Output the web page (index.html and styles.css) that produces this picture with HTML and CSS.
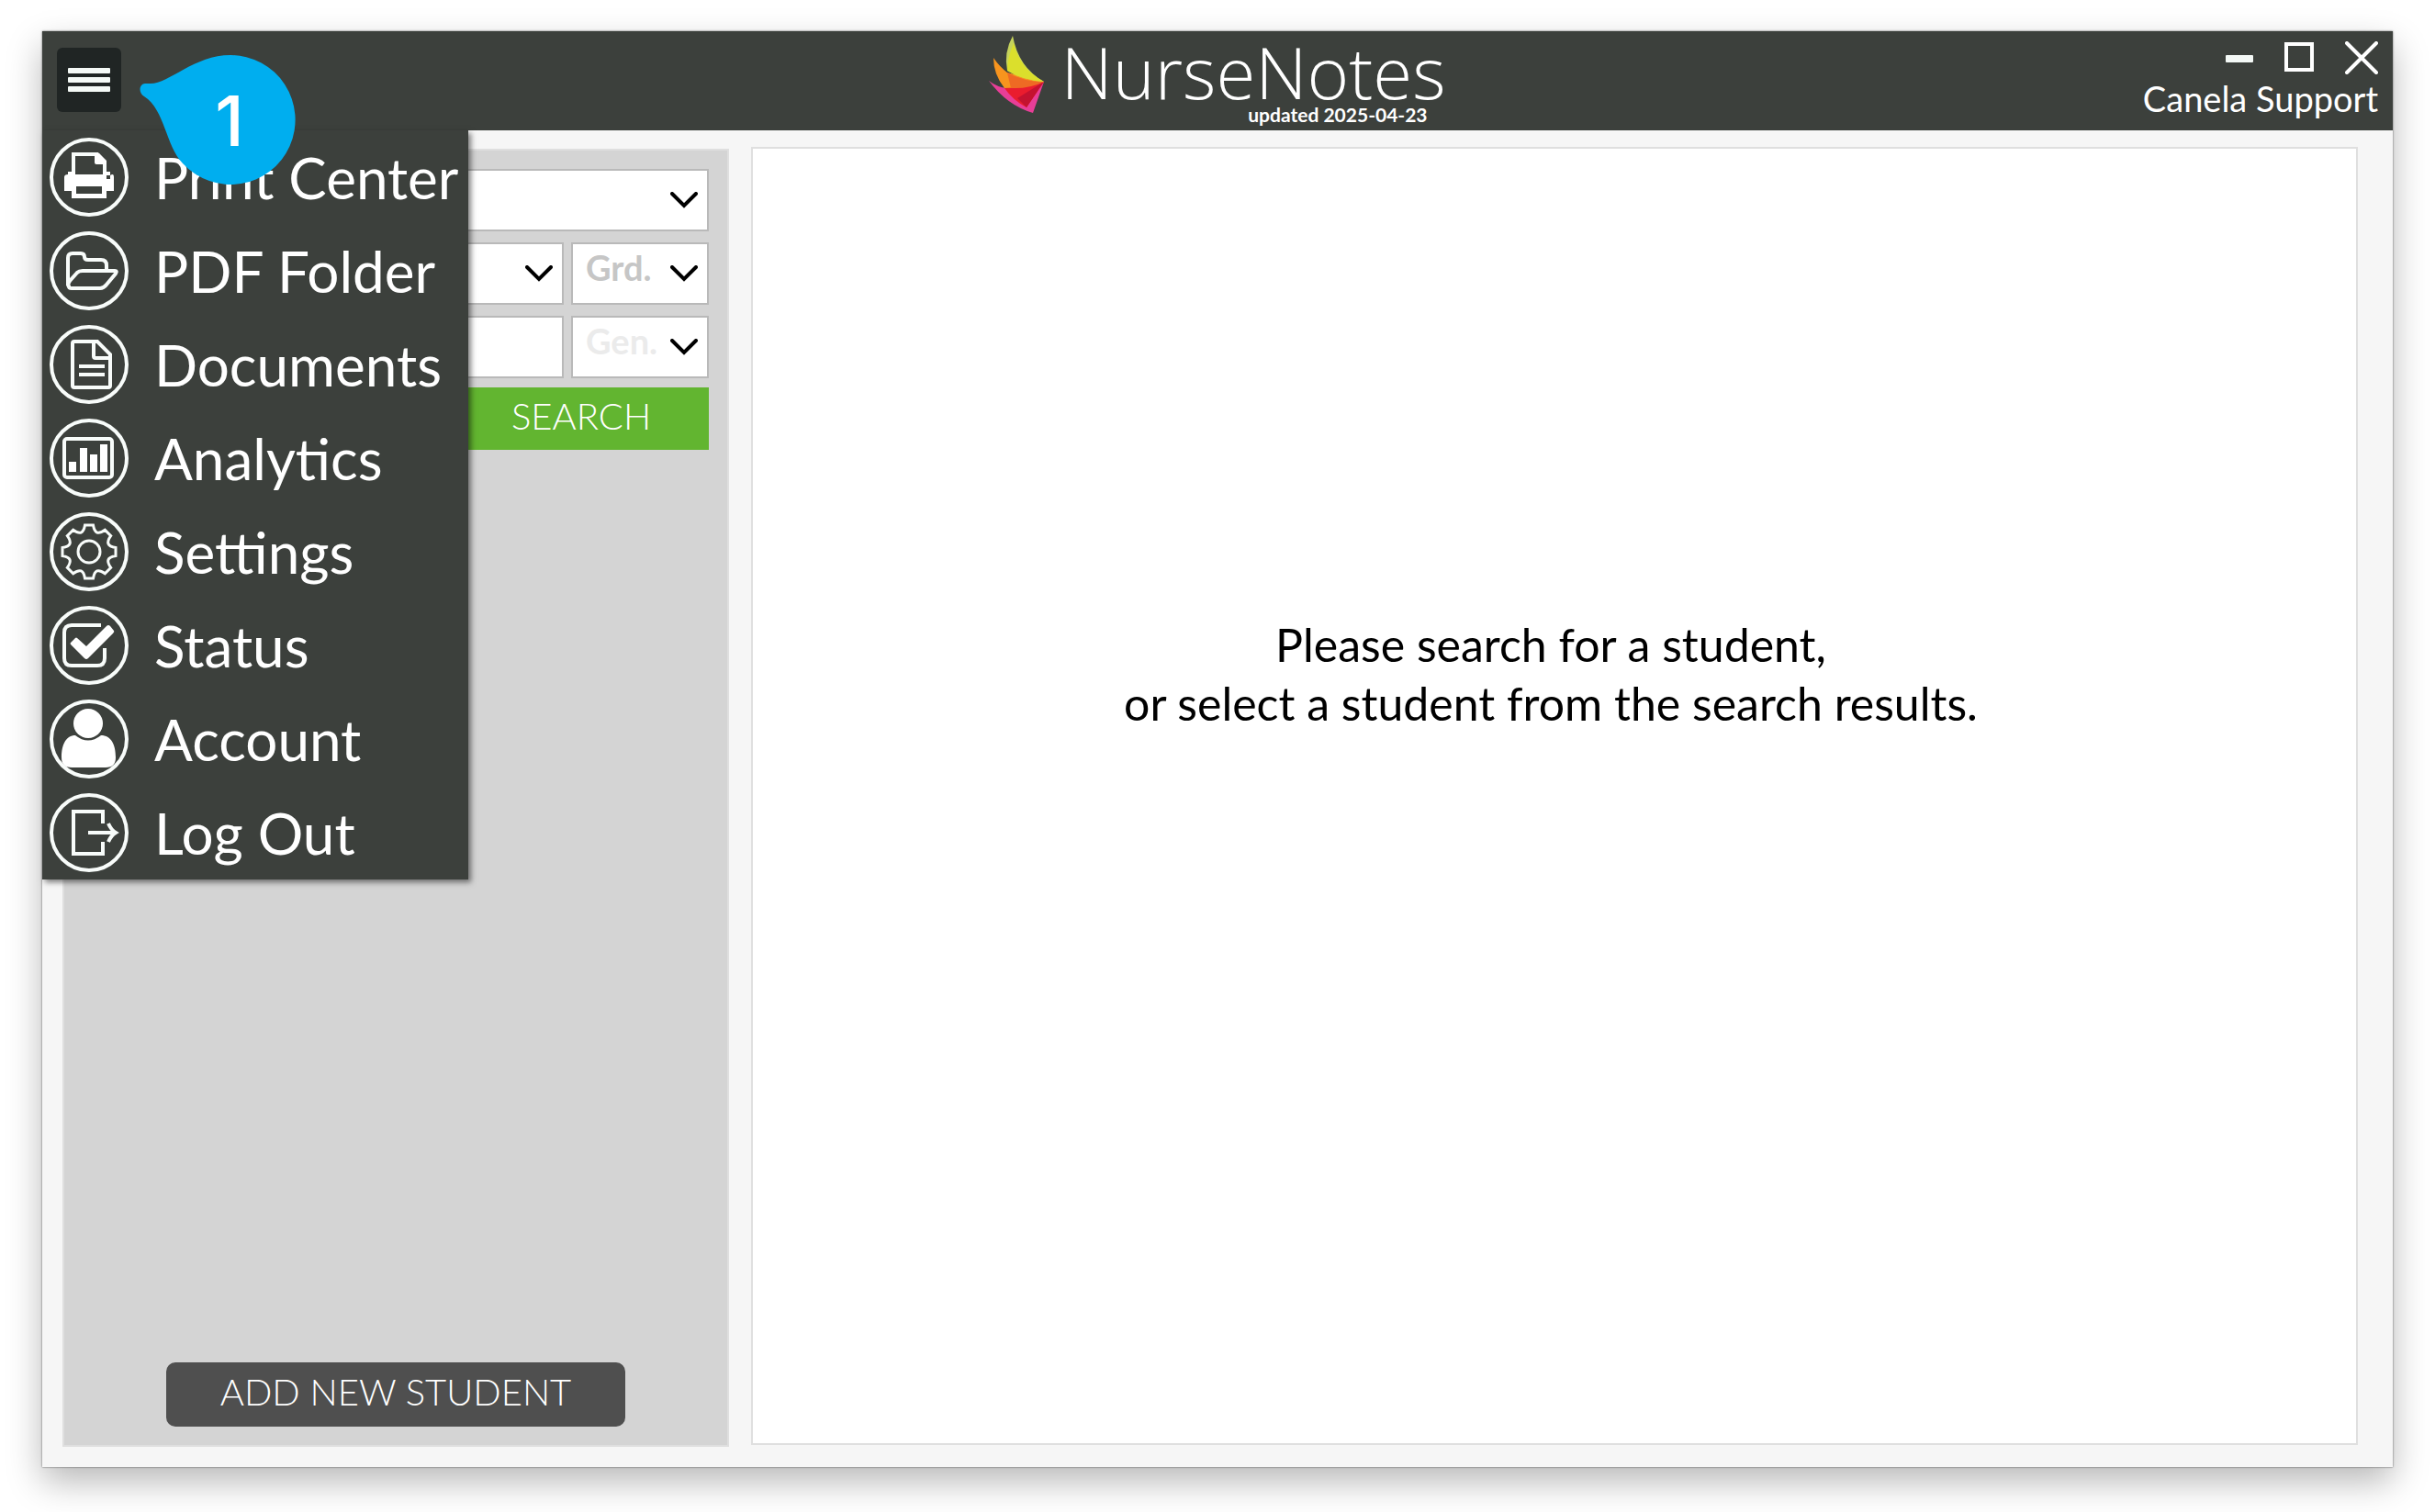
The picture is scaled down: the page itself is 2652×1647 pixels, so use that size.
FILE: index.html
```
<!DOCTYPE html>
<html lang="en">
<head>
    <meta charset="UTF-8">
    <meta name="viewport" content="width=device-width, initial-scale=1.0">
    <title>NurseNotes</title>
    <link rel="stylesheet" href="styles.css">
</head>
<body>
    <div class="window">
        <header class="header">
            <div class="header-left">
                <button class="menu-button" type="button" aria-label="Menu" aria-expanded="true">
                    <span class="bar"></span>
                    <span class="bar"></span>
                    <span class="bar"></span>
                </button>
            </div>

            <div class="brand">
                <svg class="brand-mark" viewBox="0 0 60 84" aria-hidden="true">
                    <path fill="#e83e97" d="M0 49Q9 56 20 57L60 50L48 84Q20 76 0 49Z"/>
                    <path fill="#ea1c2e" d="M17 57L60 50L41 78Q26 70 17 57Z"/>
                    <path fill="#c41230" d="M31 68L60 50L41 78Z"/>
                    <path fill="#f7941e" d="M5 24Q12 34 20 40L60 50Q40 57 17 57Q5 42 5 24Z"/>
                    <path fill="#ee6a24" d="M20 40Q38 50 60 50Q44 58 24 57Z"/>
                    <path fill="#c6d35c" d="M26 0Q16 18 20 38Q36 48 60 50Q32 34 26 0Z"/>
                    <path fill="#dbdf2c" d="M27 8Q20 24 20 38Q36 48 60 50Q34 36 27 8Z"/>
                </svg>
                <div class="brand-text">
                    <span class="brand-name">NurseNotes</span>
                    <span class="brand-updated">updated 2025-04-23</span>
                </div>
            </div>

            <div class="header-right">
                <div class="window-controls">
                    <button type="button" aria-label="Minimize">
                        <svg width="30" height="36" viewBox="0 0 30 36"><rect y="15" width="30" height="8" rx="1" fill="#f4f9f6"/></svg>
                    </button>
                    <button type="button" aria-label="Maximize">
                        <svg width="32" height="36" viewBox="0 0 32 36"><rect x="2" y="3" width="28" height="28" fill="none" stroke="#fff" stroke-width="4"/></svg>
                    </button>
                    <button type="button" aria-label="Close">
                        <svg width="36" height="36" viewBox="0 0 36 36"><path d="M2 2L34 34M34 2L2 34" stroke="#fff" stroke-width="4" stroke-linecap="round"/></svg>
                    </button>
                </div>
                <div class="user-name">Canela Support</div>
            </div>

            <nav class="menu">
                <a href="#" class="menu-item">
                    <svg class="menu-icon" viewBox="0 0 86 86">
                        <circle cx="43" cy="43" r="41"/>
                        <path d="M26 40V18H52L60 27V40"/>
                        <path class="solid" d="M49 17H54L62 25V29H51Q49 29 49 27Z"/>
                        <path class="solid" d="M20 37H66V41Q70 38 70 43V58H62V66H24V58H16V43Q16 40 20 40Z"/>
                        <path class="hole" d="M28 20H48V28Q48 31 52 31H58V40H28ZM29 53H57V61H29ZM62 41H66V45H62Z"/>
                    </svg>
                    Print Center
                </a>
                <a href="#" class="menu-item">
                    <svg class="menu-icon" viewBox="0 0 86 86">
                        <circle cx="43" cy="43" r="41"/>
                        <path d="M20 59V29Q20 24 25 24H34Q38 24 38 28Q38 31 42 31H56Q62 31 62 37V42"/>
                        <path d="M21 60Q19 58 22 54L30 45Q32 43 36 43H71Q74 43 72 46L62 58Q59 62 55 62H24Q21 62 21 60Z"/>
                    </svg>
                    PDF Folder
                </a>
                <a href="#" class="menu-item">
                    <svg class="menu-icon" viewBox="0 0 86 86">
                        <circle cx="43" cy="43" r="41"/>
                        <path d="M27 18H52L66 32V66Q66 68 64 68H27Q25 68 25 66V20Q25 18 27 18ZM48 18V34Q48 36 50 36H66M32 45H60M32 54H60"/>
                    </svg>
                    Documents
                </a>
                <a href="#" class="menu-item">
                    <svg class="menu-icon" viewBox="0 0 86 86">
                        <circle cx="43" cy="43" r="41"/>
                        <rect x="16" y="22" width="52" height="42" rx="3"/>
                        <path class="solid" d="M21 47H29V58H21ZM33 32H41V58H33ZM44 39H52V58H44ZM55 28H63V58H55Z"/>
                    </svg>
                    Analytics
                </a>
                <a href="#" class="menu-item">
                    <svg class="menu-icon" viewBox="0 0 86 86">
                        <circle cx="43" cy="43" r="41"/>
                        <g transform="translate(43 43)" class="thin">
                            <path d="M-4.5 -29H4.5C6 -20 9.9 -18.4 17.3 -23.7L23.7 -17.3C18.4 -9.9 20 -6 29 -4.5V4.5C20 6 18.4 9.9 23.7 17.3L17.3 23.7C9.9 18.4 6 20 4.5 29H-4.5C-6 20 -9.9 18.4 -17.3 23.7L-23.7 17.3C-18.4 9.9 -20 6 -29 4.5V-4.5C-20 -6 -18.4 -9.9 -23.7 -17.3L-17.3 -23.7C-9.9 -18.4 -6 -20 -4.5 -29Z"/>
                            <circle r="12"/>
                        </g>
                    </svg>
                    Settings
                </a>
                <a href="#" class="menu-item">
                    <svg class="menu-icon" viewBox="0 0 86 86">
                        <circle cx="43" cy="43" r="41"/>
                        <path d="M56 21H24Q16 21 16 29V57Q16 65 24 65H52Q60 65 60 57V46"/>
                        <path class="solid" d="M23 42Q22 41 23 40L28 35Q29 34 30 35L40 44L62 22Q64 20 66 22L70 27Q71 28 69 30L42 57Q40 59 38 57Z"/>
                    </svg>
                    Status
                </a>
                <a href="#" class="menu-item">
                    <svg class="menu-icon" viewBox="0 0 86 86">
                        <circle cx="43" cy="43" r="41"/>
                        <circle class="solid" cx="42" cy="26" r="16"/>
                        <path class="solid" d="M28 39Q42 50 56 39C67 39 72 49 72 63Q72 74 61 74H24Q13 74 13 63C13 49 18 39 28 39Z"/>
                    </svg>
                    Account
                </a>
                <a href="#" class="menu-item">
                    <svg class="menu-icon" viewBox="0 0 86 86">
                        <circle cx="43" cy="43" r="41"/>
                        <path d="M58 33V20H26V66H58V53"/>
                        <path d="M42 43H72M64 33Q67 40 72 43Q67 46 64 53"/>
                    </svg>
                    Log Out
                </a>
            </nav>

            <!-- step marker pointing at the menu button -->
            <div class="callout">
                <svg class="callout-shape" viewBox="0 0 170 142" aria-hidden="true">
                    <path fill="#00aeef" d="M6 31H12C32 31 60 0 99 0A70.5 70.5 0 1 1 47 118C28 98 28 60 5 45C-2 41 0 31 6 31Z"/>
                </svg>
                <span class="callout-number">1</span>
            </div>
        </header>

        <main class="content">
            <aside class="search-panel">
                <form class="search-form" id="search-form">
                    <div class="field field-wide">
                        <select aria-label="School"><option></option></select>
                        <svg class="chevron" viewBox="0 0 30 18"><path d="M2 2L15 15L28 2"/></svg>
                    </div>
                    <div class="field">
                        <select aria-label="Student"><option></option></select>
                        <svg class="chevron" viewBox="0 0 30 18"><path d="M2 2L15 15L28 2"/></svg>
                    </div>
                    <div class="field">
                        <select class="grade" aria-label="Grade"><option>Grd.</option></select>
                        <svg class="chevron" viewBox="0 0 30 18"><path d="M2 2L15 15L28 2"/></svg>
                    </div>
                    <div class="field">
                        <input type="text" aria-label="Student ID">
                    </div>
                    <div class="field">
                        <select class="gender" aria-label="Gender"><option>Gen.</option></select>
                        <svg class="chevron" viewBox="0 0 30 18"><path d="M2 2L15 15L28 2"/></svg>
                    </div>
                </form>
                <button class="search-button" type="submit" form="search-form">SEARCH</button>
                <button class="add-button" type="button">ADD NEW STUDENT</button>
            </aside>

            <section class="result-panel">
                <p>Please search for a student,<br>or select a student from the search results.</p>
            </section>
        </main>
    </div>
</body>
</html>
```
FILE: styles.css
```
* {
    box-sizing: border-box;
}

body {
    margin: 0;
    min-height: 100vh;
    padding: 34px 46px 49px;
    display: flex;
    background-color: #fff;
    font-family: Lato, "Open Sans", sans-serif;
}

button, input, select {
    font-family: inherit;
    margin: 0;
}

button {
    border: none;
    padding: 0;
    color: #fff;
    cursor: pointer;
}

.window {
    flex: 1;
    display: flex;
    flex-direction: column;
    background-color: #f6f6f6;
    box-shadow: 0 0 2px rgba(0, 0, 0, 0.6), 0 16px 36px rgba(0, 0, 0, 0.28);
}

/* header */
.header {
    position: relative;
    height: 108px;
    display: grid;
    grid-template-columns: 1fr auto 1fr;
    background-color: #3c403c;
    color: #fff;
}

.header-left {
    padding: 18px 16px;
}

.menu-button {
    width: 70px;
    height: 70px;
    display: flex;
    flex-direction: column;
    align-items: center;
    justify-content: center;
    gap: 4px;
    background-color: #202524;
    border-radius: 6px;
}

.menu-button .bar {
    width: 46px;
    height: 6px;
    background-color: #f4f9f6;
    border-radius: 1px;
}

.brand {
    display: flex;
    gap: 18px;
    padding-top: 5px;
}

.brand-mark {
    width: 60px;
    height: 84px;
}

.brand-text {
    display: flex;
    flex-direction: column;
}

.brand-name {
    font-family: "Open Sans", sans-serif;
    font-size: 78px;
    font-weight: 300;
    line-height: 78px;
}

.brand-updated {
    align-self: flex-end;
    padding-right: 20px;
    font-size: 21px;
    font-weight: 700;
    line-height: 16px;
}

.header-right {
    display: flex;
    flex-direction: column;
    align-items: flex-end;
    padding: 11px 16px 0 0;
}

.window-controls {
    display: flex;
    gap: 34px;
}

.window-controls button {
    background: none;
}

.window-controls svg {
    display: block;
}

.user-name {
    font-size: 38px;
    line-height: 52px;
}

/* menu */
.menu {
    position: absolute;
    top: 100%;
    left: 0;
    width: 464px;
    background-color: #3c403c;
    box-shadow: 3px 3px 6px rgba(0, 0, 0, 0.5);
    z-index: 1;
}

.menu-item {
    height: 102px;
    display: flex;
    align-items: center;
    gap: 28px;
    padding-left: 8px;
    color: #fff;
    font-size: 62px;
    white-space: nowrap;
    text-decoration: none;
}

.menu-icon {
    width: 86px;
    height: 86px;
    fill: none;
    stroke: #f8fcfa;
    stroke-width: 4;
}

.menu-icon .solid {
    fill: #fff;
    stroke: none;
}

.menu-icon .hole {
    fill: #3c403c;
    stroke: none;
}

.menu-icon .thin {
    stroke-width: 3;
}

.callout {
    position: absolute;
    top: 26px;
    left: 106px;
    width: 170px;
    height: 142px;
    z-index: 2;
}

.callout-shape {
    display: block;
}

.callout-number {
    position: absolute;
    inset: 0 0 0 26px;
    font-family: Inter, sans-serif;
    font-size: 76px;
    font-weight: 500;
    line-height: 142px;
    text-align: center;
}

/* content */
.content {
    flex: 1;
    display: flex;
    gap: 24px;
    padding: 18px 38px 22px 22px;
}

.search-panel {
    width: 726px;
    margin-top: 2px;
    display: flex;
    flex-direction: column;
    gap: 10px;
    padding: 20px;
    background-color: #d4d4d4;
    border: 2px solid #dfdfdf;
}

.search-form {
    display: grid;
    grid-template-columns: 1fr 150px;
    gap: 12px 8px;
}

.field {
    display: grid;
    align-items: center;
}

.field-wide {
    grid-column: 1 / -1;
}

.field select, .field input {
    grid-area: 1 / 1;
    width: 100%;
    height: 68px;
    padding: 0 0 14px 14px;
    background-color: #fff;
    border: 2px solid #b9b9b9;
    border-radius: 0;
    font-size: 38px;
    font-weight: 700;
    appearance: none;
}

.field .grade {
    color: #c6c6c6;
}

.field .gender {
    color: #ebebeb;
}

.chevron {
    grid-area: 1 / 1;
    justify-self: end;
    width: 30px;
    height: 18px;
    margin-right: 12px;
    fill: none;
    stroke: #000;
    stroke-width: 4;
    stroke-linecap: round;
    pointer-events: none;
}

.search-button, .add-button {
    height: 68px;
    padding-bottom: 6px;
    font-size: 40px;
    font-weight: 300;
}

.search-button {
    align-self: flex-end;
    width: 278px;
    background-color: #62b530;
}

.add-button {
    align-self: center;
    width: 500px;
    height: 70px;
    margin-top: auto;
    background-color: #4f4f4f;
    border-radius: 10px;
}

.result-panel {
    flex: 1;
    margin-bottom: 2px;
    padding: 508px 8px 0 0;
    background-color: #fff;
    border: 2px solid #dfdfdf;
}

.result-panel p {
    margin: 0;
    font-size: 50px;
    line-height: 64px;
    text-align: center;
}
```
